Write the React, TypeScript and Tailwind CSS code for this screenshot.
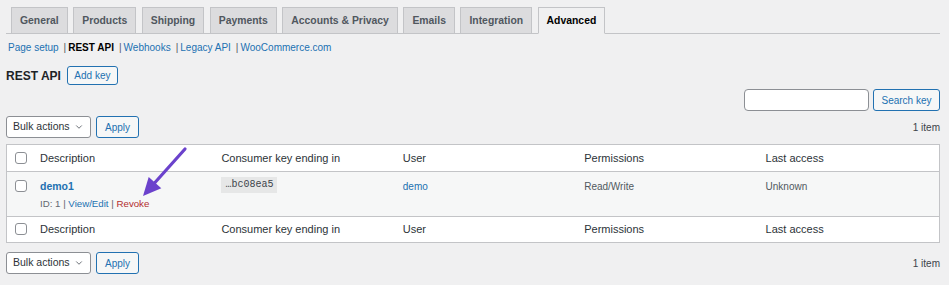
import { ChevronDown } from "lucide-react";

const tabs = [
  "General",
  "Products",
  "Shipping",
  "Payments",
  "Accounts & Privacy",
  "Emails",
  "Integration",
  "Advanced",
];

const sections = [
  { label: "Page setup", current: false },
  { label: "REST API", current: true },
  { label: "Webhooks", current: false },
  { label: "Legacy API", current: false },
  { label: "WooCommerce.com", current: false },
];

const columns = ["Description", "Consumer key ending in", "User", "Permissions", "Last access"];

function Checkbox() {
  return <span className="block h-[12px] w-[12px] rounded-[3px] border border-[#8c8f94] bg-white" />;
}

function TableNav({ top }: { top?: boolean }) {
  return (
    <div className={`flex items-center justify-between ${top ? "mt-[5px]" : "mt-[9px]"}`}>
      <div className="flex items-center gap-[5px]">
        <div className="flex h-[22px] w-[85px] items-center justify-between rounded-[3px] border border-[#8c8f94] bg-white pl-[6px] pr-[6px] text-[10.5px] text-[#2c3338]">
          <span>Bulk actions</span>
          <ChevronDown className="h-[10px] w-[10px] text-[#50575e]" strokeWidth={2} />
        </div>
        <button className="flex h-[22px] w-[43px] items-center justify-center rounded-[3px] border border-[#2271b1] bg-[#f6f7f7] text-[10px] text-[#2271b1]">
          Apply
        </button>
      </div>
      <span className="text-[10px] text-[#3c434a]">1 item</span>
    </div>
  );
}

function HeaderRow({ foot }: { foot?: boolean }) {
  return (
    <tr className={`bg-white ${foot ? "border-t border-[#c3c4c7]" : "border-b border-[#c3c4c7]"}`}>
      <td className="h-[26px] pl-[8px] align-middle">
        <Checkbox />
      </td>
      {columns.map((c) => (
        <th key={c} className="h-[26px] pl-[8px] text-left align-middle text-[11px] font-normal text-[#2c3338]">
          {c}
        </th>
      ))}
    </tr>
  );
}

export default function App() {
  return (
    <div className="relative min-h-[285px] bg-[#f0f0f1] pl-[6px] pr-[9px] font-['Liberation_Sans',Arial,sans-serif]">
      {/* Settings tabs */}
      <nav className="flex gap-[5.5px] border-b border-[#c3c4c7] pl-[5px] pt-[7px]">
        {tabs.map((t) => {
          const active = t === "Advanced";
          return (
            <div
              key={t}
              className={`-mb-px flex h-[27px] items-center border border-[#c3c4c7] px-[8px] text-[10.4px] font-semibold ${
                active ? "border-b-[#f0f0f1] bg-[#f0f0f1] text-black" : "bg-[#dcdcde] text-[#50575e]"
              }`}
            >
              {t}
            </div>
          );
        })}
      </nav>

      {/* Sub sections */}
      <ul className="mt-[7px] flex pl-[2px] text-[10px] leading-[14px]">
        {sections.map((s, i) => (
          <li key={s.label} className="flex">
            <span className={s.current ? "font-bold text-black" : "text-[#2271b1]"}>{s.label}</span>
            {i < sections.length - 1 && <span className="ml-[5px] mr-[2px] text-[#50575e]">|</span>}
          </li>
        ))}
      </ul>

      {/* Heading */}
      <div className="mt-[11px] flex items-center">
        <h2 className="text-[12px] font-bold text-[#1d2327]">REST API</h2>
        <button className="ml-[6px] flex h-[19px] w-[51px] items-center justify-center rounded-[3px] border border-[#2271b1] bg-[#f6f7f7] text-[10px] text-[#2271b1]">
          Add key
        </button>
      </div>

      {/* Search */}
      <div className="mt-[4px] flex justify-end gap-[4px]">
        <div className="h-[22px] w-[125px] rounded-[4px] border border-[#8c8f94] bg-white" />
        <button className="flex h-[22px] w-[67px] items-center justify-center rounded-[3px] border border-[#2271b1] bg-[#f6f7f7] text-[10px] text-[#2271b1]">
          Search key
        </button>
      </div>

      <TableNav top />

      {/* Keys table */}
      <div className="mt-[6px] border border-[#c3c4c7]">
        <table className="w-full table-fixed">
          <colgroup>
            <col className="w-[25px]" />
            <col />
            <col />
            <col />
            <col />
            <col />
          </colgroup>
          <thead>
            <HeaderRow />
          </thead>
          <tbody>
            <tr className="bg-[#f6f7f7] text-[10px] leading-[13px]">
              <td className="h-[45px] pl-[8px] pt-[8px] align-top">
                <Checkbox />
              </td>
              <td className="pl-[8px] pt-[8px] align-top">
                <div className="text-[10.5px] font-bold text-[#2271b1]">demo1</div>
                <div className="mt-[4px] text-[9.7px] text-[#646970]">
                  ID: 1 | <span className="text-[#2271b1]">View/Edit</span> |{" "}
                  <span className="text-[#b32d2e]">Revoke</span>
                </div>
              </td>
              <td className="pl-[8px] pt-[5px] align-top">
                <code className="inline-block bg-[#e6e7e7] px-[4px] py-[2px] font-['Liberation_Mono',monospace] text-[10px] leading-[12px] text-[#3c434a]">
                  …bc08ea5
                </code>
              </td>
              <td className="pl-[8px] pt-[8px] align-top text-[#2271b1]">demo</td>
              <td className="pl-[8px] pt-[8px] align-top text-[#50575e]">Read/Write</td>
              <td className="pl-[8px] pt-[8px] align-top text-[#50575e]">Unknown</td>
            </tr>
          </tbody>
          <tfoot>
            <HeaderRow foot />
          </tfoot>
        </table>
      </div>

      <TableNav />

      {/* Annotation arrow */}
      <svg className="pointer-events-none absolute left-[140px] top-[145px]" width="50" height="56" viewBox="0 0 50 56">
        <line x1="45" y1="4" x2="15" y2="37.5" stroke="#6b42cc" strokeWidth="3.2" strokeLinecap="round" />
        <polygon points="3,51 8.7,31.9 21.3,43.3" fill="#6b42cc" />
      </svg>
    </div>
  );
}
